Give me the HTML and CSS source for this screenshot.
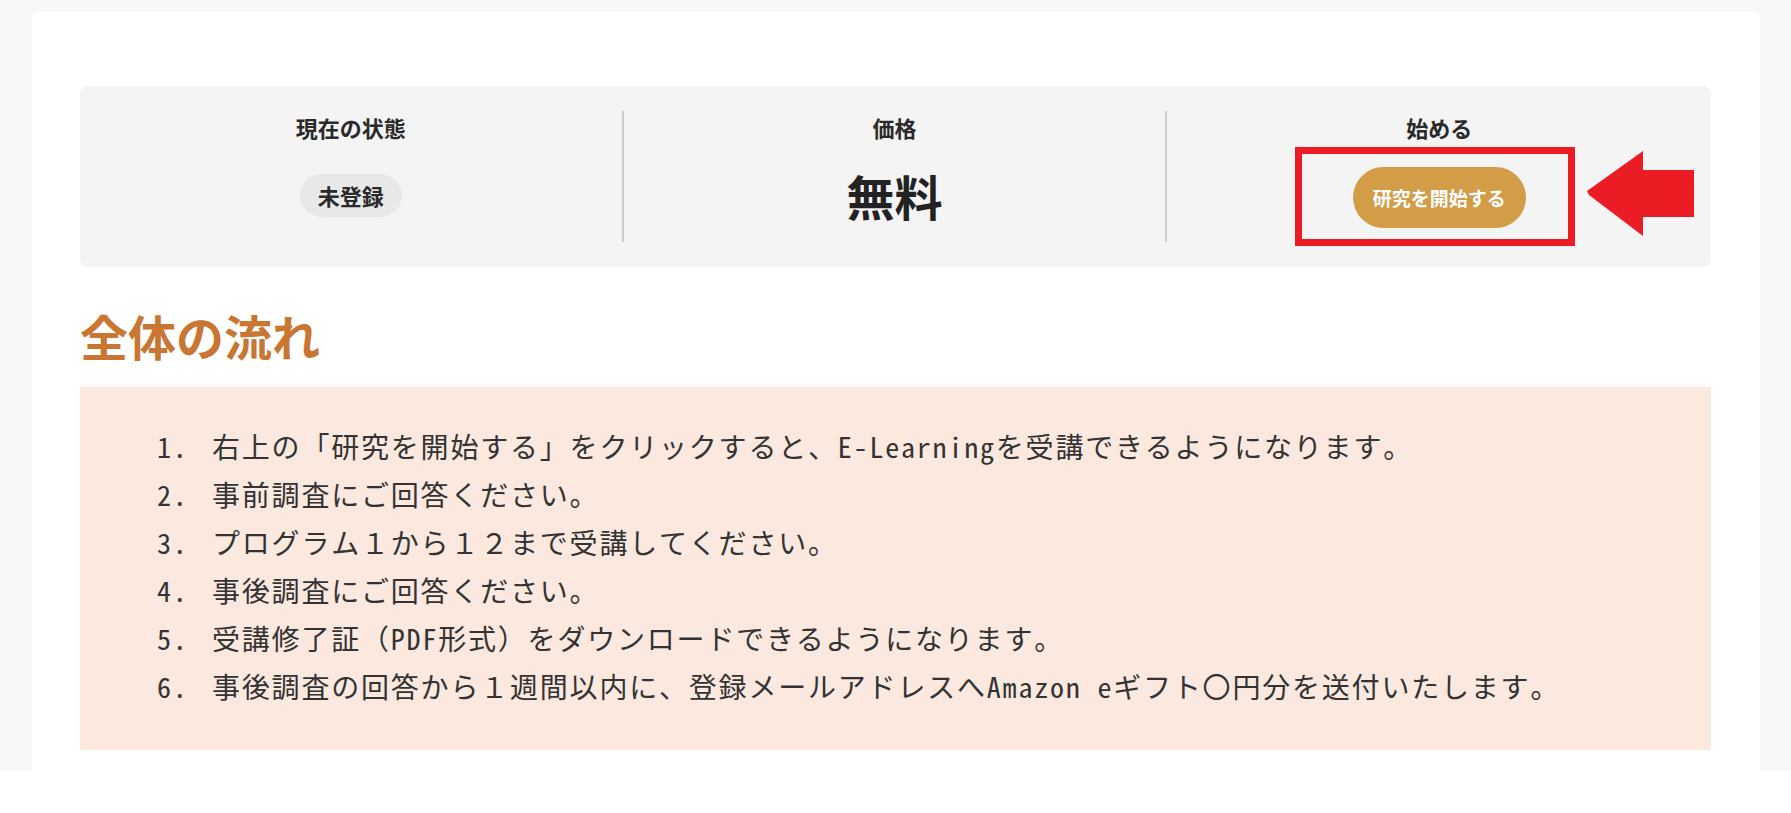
FILE: index.html
```html
<!DOCTYPE html>
<html lang="ja">
<head>
<meta charset="utf-8">
<title>全体の流れ</title>
<link rel="stylesheet" href="styles.css">
</head>
<body>
<div class="page">
  <main class="card">
    <section class="status-panel">
      <div class="status-col">
        <div class="status-label">現在の状態</div>
        <div class="status-value">
          <span class="badge">未登録</span>
        </div>
      </div>
      <div class="status-col">
        <div class="status-label">価格</div>
        <div class="status-value">
          <span class="price">無料</span>
        </div>
      </div>
      <div class="status-col status-col-last">
        <div class="status-label">始める</div>
        <div class="status-value">
          <button class="start-btn" type="button">研究を開始する</button>
        </div>
      </div>
      <div class="highlight-box"></div>
      <svg class="highlight-arrow" width="107" height="85" viewBox="0 0 107 85" aria-hidden="true">
        <polygon points="0,40 2,44 56,85 56,66 107,66 107,19 56,19 56,0" fill="#ec1c24"/>
      </svg>
    </section>

    <h2 class="section-title">全体の流れ</h2>

    <section class="flow-box">
      <ol class="steps">
        <li><span class="num">1.</span><span class="txt">右上の「研究を開始する」をクリックすると、E-Learningを受講できるようになります。</span></li>
        <li><span class="num">2.</span><span class="txt">事前調査にご回答ください。</span></li>
        <li><span class="num">3.</span><span class="txt">プログラム１から１２まで受講してください。</span></li>
        <li><span class="num">4.</span><span class="txt">事後調査にご回答ください。</span></li>
        <li><span class="num">5.</span><span class="txt">受講修了証（PDF形式）をダウンロードできるようになります。</span></li>
        <li><span class="num">6.</span><span class="txt">事後調査の回答から１週間以内に、登録メールアドレスへAmazon eギフト〇円分を送付いたします。</span></li>
      </ol>
    </section>
  </main>
</div>
</body>
</html>
```

FILE: styles.css
```css
* {
  box-sizing: border-box;
}

html, body {
  margin: 0;
  padding: 0;
  background: #ffffff;
}

body {
  font-family: "Noto Sans CJK JP", "Noto Sans", sans-serif;
  color: #2a2a2a;
}

.page {
  background: #f6f7f9;
  padding: 12px 31px 0 32px;
}

.card {
  background: #ffffff;
  border-radius: 6px 6px 0 0;
  padding: 74px 49px 21px 48px;
}

/* ---------- status panel ---------- */
.status-panel {
  position: relative;
  display: grid;
  grid-template-columns: 1fr 1fr 1fr;
  background: #f4f4f4;
  border-radius: 8px;
  padding: 25px 0;
}

.status-col {
  display: flex;
  flex-direction: column;
  align-items: center;
  border-right: 2px solid #cccccc;
}

.status-col-last {
  border-right: none;
}

.status-label {
  font-size: 22px;
  font-weight: 700;
  line-height: 33px;
  color: #2a2a2a;
}

.status-value {
  height: 98px;
  padding-top: 4px;
  display: flex;
  align-items: center;
  justify-content: center;
}

.badge {
  display: inline-block;
  background: #e8e8e8;
  border-radius: 22px;
  padding: 5px 18px;
  font-size: 22px;
  font-weight: 700;
  line-height: 33px;
  color: #2a2a2a;
}

.price {
  font-size: 48px;
  font-weight: 700;
  line-height: 58px;
  color: #222222;
}

.start-btn {
  font-family: "Noto Sans CJK JP", "Noto Sans", sans-serif;
  background: #d39c47;
  color: #ffffff;
  border: none;
  border-radius: 31px;
  height: 61px;
  padding: 0 20px;
  margin-top: 4px;
  font-size: 19px;
  font-weight: 700;
  line-height: 1;
  cursor: pointer;
}

/* annotation overlay */
.highlight-box {
  position: absolute;
  left: 1215px;
  top: 61px;
  width: 280px;
  height: 99px;
  border: 7px solid #ec1c24;
  pointer-events: none;
}

.highlight-arrow {
  position: absolute;
  left: 1507px;
  top: 65px;
}

/* ---------- heading ---------- */
.section-title {
  margin: 40px 0 22px;
  font-size: 48px;
  font-weight: 700;
  line-height: 57.6px;
  color: #c97632;
}

/* ---------- flow box ---------- */
.flow-box {
  background: #fbe8de;
  padding: 35px 40px 40px 77px;
}

.steps {
  list-style: none;
  margin: 0;
  padding: 0;
  font-family: "Noto Sans Mono CJK JP", "Noto Sans CJK JP", monospace;
  font-size: 28px;
  line-height: 48px;
  letter-spacing: 1.8px;
  color: #333333;
}

.steps li {
  display: flex;
  white-space: nowrap;
}

.num {
  flex: 0 0 55px;
}
```
